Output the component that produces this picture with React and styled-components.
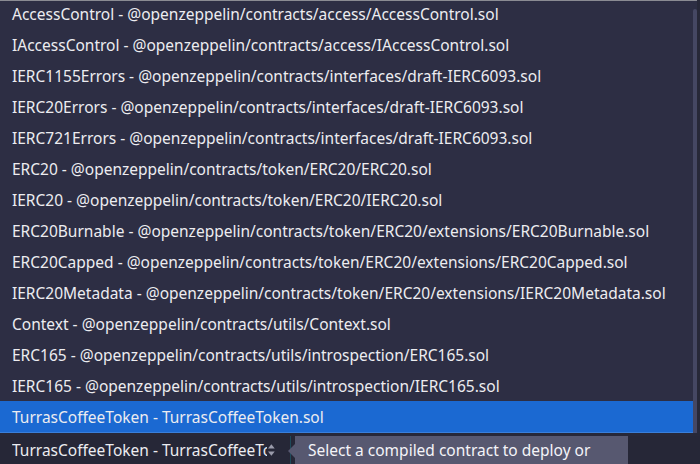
import React from "react";
import styled, { createGlobalStyle } from "styled-components";

const GlobalStyle = createGlobalStyle`
  html, body {
    margin: 0;
    padding: 0;
    background: #262737;
  }
  body {
    font-family: "Noto Sans", "Open Sans", sans-serif;
  }
`;

const Screen = styled.div`
  position: relative;
  width: 700px;
  height: 464px;
  overflow: hidden;
  display: flex;
  flex-direction: column;
  background: #262737;
`;

const Editor = styled.div`
  flex: 1;
  display: flex;
  flex-direction: column;
  justify-content: flex-end;
  align-items: flex-end;
  padding: 0 4px 22px 0;
  background: #272838;
  color: #9fc3e8;
  font-family: "DejaVu Sans Mono", monospace;
  font-size: 13px;
  line-height: 14px;
`;

const CodeLine = styled.div`
  white-space: nowrap;
  span.kw {
    color: #6fbf73;
  }
`;

const ControlBar = styled.div`
  height: 28px;
  display: flex;
  align-items: stretch;
`;

const SelectBox = styled.div`
  width: 291px;
  display: flex;
  align-items: center;
  justify-content: space-between;
  padding: 0 14px 0 12px;
  box-sizing: border-box;
  background: #262737;
  border-right: 1px solid #1f4a5a;
  color: #ececf0;
  font-size: 15.5px;
  white-space: nowrap;
  overflow: hidden;
`;

const SelectText = styled.span`
  overflow: hidden;
  width: 264px;
`;

const Tooltip = styled.div`
  position: relative;
  margin-left: 4px;
  width: 333px;
  display: flex;
  align-items: center;
  padding-left: 13px;
  box-sizing: border-box;
  background: #575870;
  color: #f4f4f8;
  font-size: 15.5px;
  white-space: nowrap;

  &::before {
    content: "";
    position: absolute;
    left: -7px;
    top: 8px;
    border-top: 7px solid transparent;
    border-bottom: 7px solid transparent;
    border-right: 7px solid #575870;
  }
`;

const Dropdown = styled.div`
  position: absolute;
  top: 0;
  left: 0;
  width: 697px;
  height: 433px;
  display: flex;
  border-top: 1px solid #8a8b93;
  box-sizing: border-box;
  background: #2d2e44;
`;

const List = styled.ul`
  flex: 1;
  margin: -3px 0 0 0;
  padding: 0;
  list-style: none;
  overflow: hidden;
`;

const Item = styled.li`
  height: 31px;
  display: flex;
  align-items: center;
  padding-left: 12px;
  color: #ececf0;
  font-size: 15.5px;
  white-space: nowrap;
  background: ${(p) => (p.$selected ? "#1b69d2" : "transparent")};
  border-bottom: ${(p) => (p.$selected ? "1px solid #3a7fd9" : "none")};
`;

const Scrollbar = styled.div`
  width: 4px;
  display: flex;
  flex-direction: column;
  padding-top: 8px;
  background: #2d2e44;
`;

const Thumb = styled.div`
  flex: 1;
  background: #454763;
  border-radius: 2px 2px 0 0;
`;

const Arrows = () => (
  <svg width="9" height="14" viewBox="0 0 9 14">
    <path d="M4.5 1 L8 5.5 H1 Z" fill="#9a9bab" />
    <path d="M4.5 13 L8 8.5 H1 Z" fill="#9a9bab" />
  </svg>
);

const contracts = [
  "AccessControl - @openzeppelin/contracts/access/AccessControl.sol",
  "IAccessControl - @openzeppelin/contracts/access/IAccessControl.sol",
  "IERC1155Errors - @openzeppelin/contracts/interfaces/draft-IERC6093.sol",
  "IERC20Errors - @openzeppelin/contracts/interfaces/draft-IERC6093.sol",
  "IERC721Errors - @openzeppelin/contracts/interfaces/draft-IERC6093.sol",
  "ERC20 - @openzeppelin/contracts/token/ERC20/ERC20.sol",
  "IERC20 - @openzeppelin/contracts/token/ERC20/IERC20.sol",
  "ERC20Burnable - @openzeppelin/contracts/token/ERC20/extensions/ERC20Burnable.sol",
  "ERC20Capped - @openzeppelin/contracts/token/ERC20/extensions/ERC20Capped.sol",
  "IERC20Metadata - @openzeppelin/contracts/token/ERC20/extensions/IERC20Metadata.sol",
  "Context - @openzeppelin/contracts/utils/Context.sol",
  "ERC165 - @openzeppelin/contracts/utils/introspection/ERC165.sol",
  "IERC165 - @openzeppelin/contracts/utils/introspection/IERC165.sol",
  "TurrasCoffeeToken - TurrasCoffeeToken.sol",
];

export default function App() {
  return (
    <Screen>
      <GlobalStyle />
      <Editor>
        <CodeLine>
          <span className="kw">uint8 public</span> constant D
        </CodeLine>
      </Editor>
      <ControlBar>
        <SelectBox>
          <SelectText>TurrasCoffeeToken - TurrasCoffeeToken.sol</SelectText>
          <Arrows />
        </SelectBox>
        <Tooltip>Select a compiled contract to deploy or</Tooltip>
      </ControlBar>
      <Dropdown>
        <List>
          {contracts.map((c, i) => (
            <Item key={c} $selected={i === contracts.length - 1}>
              {c}
            </Item>
          ))}
        </List>
        <Scrollbar>
          <Thumb />
        </Scrollbar>
      </Dropdown>
    </Screen>
  );
}
